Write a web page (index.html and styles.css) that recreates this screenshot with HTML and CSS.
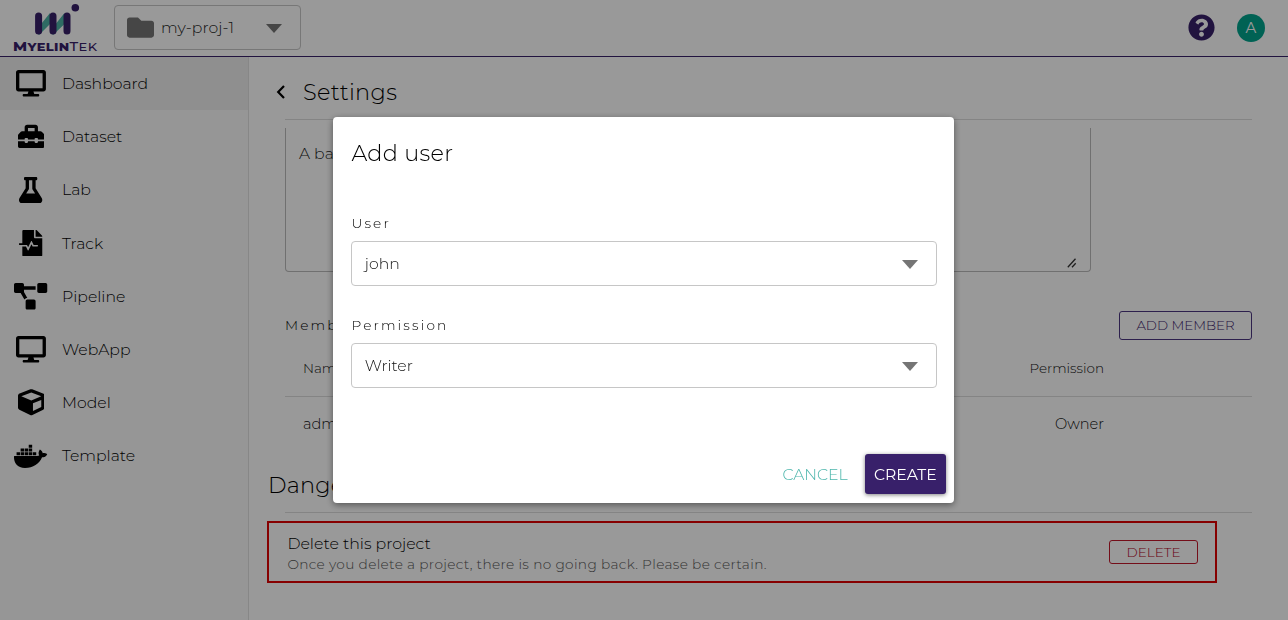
FILE: index.html
```html
<!DOCTYPE html>
<html lang="en">
<head>
<meta charset="utf-8">
<title>MyelinTek - Settings</title>
<link rel="stylesheet" href="styles.css">
</head>
<body>
<div class="app">
  <header class="topbar">
    <div class="logo">
      <svg class="logo-mark" viewBox="0 0 48 38" width="48" height="38">
        <path d="M3.5 31L18 13V24L7 35ZM18 31L32.5 13V24L21 35Z" fill="#4eb3a6"/>
        <path d="M6.6 16V31M21 16V31M35 16V31" stroke="#38206a" stroke-width="7" stroke-linecap="round" fill="none"/>
        <circle cx="43.3" cy="7.7" r="3.8" fill="#38206a"/>
      </svg>
      <div class="logo-name"><span class="cap">M</span><span>YELIN</span><span class="cap thin">T</span><span class="thin">EK</span></div>
    </div>
    <div class="project-select">
      <svg class="folder" viewBox="0 0 512 512" width="27" height="27" fill="#757575"><path d="M464 128H272l-64-64H48C21.49 64 0 85.49 0 112v288c0 26.51 21.49 48 48 48h416c26.51 0 48-21.49 48-48V176c0-26.51-21.49-48-48-48z"/></svg>
      <span class="project-name">my-proj-1</span>
      <i class="caret"></i>
    </div>
    <div class="top-actions">
      <svg viewBox="0 0 512 512" width="27" height="27" fill="#38206a"><path d="M504 256c0 136.997-111.043 248-248 248S8 392.997 8 256C8 119.083 119.043 8 256 8s248 111.083 248 248zM262.655 90c-54.497 0-89.255 22.957-116.549 63.758-3.536 5.286-2.353 12.415 2.715 16.258l34.699 26.31c5.205 3.947 12.621 3.008 16.665-2.122 17.864-22.658 30.113-35.797 57.303-35.797 20.429 0 45.698 13.148 45.698 32.958 0 14.976-12.363 22.667-32.534 33.976C247.128 238.528 216 254.941 216 296v4c0 6.627 5.373 12 12 12h56c6.627 0 12-5.373 12-12v-1.333c0-28.462 83.186-29.647 83.186-106.667 0-58.002-60.165-102-116.531-102zM256 338c-25.365 0-46 20.635-46 46 0 25.364 20.635 46 46 46s46-20.636 46-46c0-25.364-20.635-46-46-46z"/></svg>
      <div class="avatar">A</div>
    </div>
  </header>
  <div class="body">
    <nav class="sidebar">
      <a class="item active"><span class="icon"><svg viewBox="0 0 576 512"><path d="M528 0H48C21.5 0 0 21.5 0 48v320c0 26.5 21.5 48 48 48h192l-16 48h-72c-13.3 0-24 10.7-24 24s10.7 24 24 24h272c13.3 0 24-10.7 24-24s-10.7-24-24-24h-72l-16-48h192c26.5 0 48-21.5 48-48V48c0-26.5-21.5-48-48-48zm-16 352H64V64h448v288z"/></svg></span><span>Dashboard</span></a>
      <a class="item"><span class="icon"><svg viewBox="0 0 512 512"><path d="M502.63 214.63l-45.25-45.25c-6-6-14.14-9.37-22.63-9.37H384V80c0-26.51-21.49-48-48-48H176c-26.51 0-48 21.49-48 48v80H77.25c-8.49 0-16.62 3.37-22.63 9.37L9.37 214.63c-6 6-9.37 14.14-9.37 22.63V320h128v-16c0-8.84 7.16-16 16-16h32c8.84 0 16 7.16 16 16v16h128v-16c0-8.84 7.16-16 16-16h32c8.84 0 16 7.16 16 16v16h128v-82.75c0-8.48-3.37-16.62-9.37-22.62zM320 160H192V96h128v64zm64 208c0 8.84-7.16 16-16 16h-32c-8.84 0-16-7.16-16-16v-16H192v16c0 8.84-7.16 16-16 16h-32c-8.84 0-16-7.16-16-16v-16H0v96c0 17.67 14.33 32 32 32h448c17.67 0 32-14.33 32-32v-96H384v16z"/></svg></span><span>Dataset</span></a>
      <a class="item"><span class="icon"><svg viewBox="0 0 448 512"><path d="M437.2 403.5L320 215V64h8c13.3 0 24-10.7 24-24V24c0-13.3-10.7-24-24-24H120c-13.3 0-24 10.7-24 24v16c0 13.3 10.7 24 24 24h8v151L10.8 403.5C-18.5 450.6 15.3 512 70.9 512h306.2c55.7 0 89.4-61.5 60.1-108.5zM137.9 320l48.2-77.6c3.7-5.2 5.8-11.6 5.8-18.4V64h64v160c0 6.9 2.2 13.2 5.8 18.4l48.2 77.6h-172z"/></svg></span><span>Lab</span></a>
      <a class="item"><span class="icon"><svg viewBox="0 0 448 512"><path d="M288 136V0H88C74.7 0 64 10.7 64 24v232H8c-4.4 0-8 3.6-8 8v16c0 4.4 3.6 8 8 8h140.9c3 0 5.8 1.7 7.2 4.4l19.9 39.8 56.8-113.7c2.9-5.9 11.4-5.9 14.3 0l34.7 69.5H352c8.8 0 16 7.2 16 16s-7.2 16-16 16h-89.9L240 275.8l-56.8 113.7c-2.9 5.9-11.4 5.9-14.3 0L134.1 320H64v168c0 13.3 10.7 24 24 24h336c13.3 0 24-10.7 24-24V160H312c-13.2 0-24-10.8-24-24zm153-31L343.1 7c-4.5-4.5-10.6-7-17-7H320v128h128v-6.1c0-6.3-2.5-12.4-7-16.9z"/></svg></span><span>Track</span></a>
      <a class="item"><span class="icon"><svg viewBox="0 0 640 512"><path d="M384 320H256c-17.67 0-32 14.33-32 32v128c0 17.67 14.33 32 32 32h128c17.67 0 32-14.33 32-32V352c0-17.67-14.33-32-32-32zM192 32c0-17.67-14.33-32-32-32H32C14.33 0 0 14.33 0 32v128c0 17.67 14.33 32 32 32h95.72l73.16 128.04C211.98 300.98 232.4 288 256 288h.28L192 175.51V128h224V64H192V32zM608 0H480c-17.67 0-32 14.33-32 32v128c0 17.67 14.33 32 32 32h128c17.67 0 32-14.33 32-32V32c0-17.67-14.33-32-32-32z"/></svg></span><span>Pipeline</span></a>
      <a class="item"><span class="icon"><svg viewBox="0 0 576 512"><path d="M528 0H48C21.5 0 0 21.5 0 48v320c0 26.5 21.5 48 48 48h192l-16 48h-72c-13.3 0-24 10.7-24 24s10.7 24 24 24h272c13.3 0 24-10.7 24-24s-10.7-24-24-24h-72l-16-48h192c26.5 0 48-21.5 48-48V48c0-26.5-21.5-48-48-48zm-16 352H64V64h448v288z"/></svg></span><span>WebApp</span></a>
      <a class="item"><span class="icon"><svg viewBox="0 0 512 512"><path d="M239.1 6.3l-208 78c-18.7 7-31.1 25-31.1 45v225.1c0 18.2 10.3 34.8 26.5 42.9l208 104c13.5 6.8 29.4 6.8 42.9 0l208-104c16.3-8.1 26.5-24.8 26.5-42.9V129.3c0-20-12.4-37.9-31.1-44.9l-208-78C262 2.2 250 2.2 239.1 6.3zM256 68.4l192 72v1.1l-192 78-192-78v-1.1l192-72zm32 356V275.5l160-65v133.9l-160 80z"/></svg></span><span>Model</span></a>
      <a class="item"><span class="icon"><svg viewBox="0 0 640 512"><path d="M349.9 236.3h-66.1v-59.4h66.1v59.4zm0-204.3h-66.1v60.7h66.1V32zm78.2 144.8H362v59.4h66.1v-59.4zm-156.3-72.1h-66.1v60.1h66.1v-60.1zm78.1 0h-66.1v60.1h66.1v-60.1zm276.8 100c-14.4-9.7-47.6-13.2-73.1-8.4-3.3-24-16.7-44.9-41.1-63.7l-14-9.3-9.3 14c-18.4 27.8-23.4 73.6-3.7 103.8-8.7 4.7-25.8 11.1-48.4 10.7H2.4c-8.7 50.8 5.8 116.8 44 162.1 37.1 43.9 92.7 66.2 165.4 66.2 157.4 0 273.9-72.5 328.4-204.2 21.4.4 67.6.1 91.3-45.2 1.5-2.5 6.6-13.2 8.5-17.1l-13.3-8.9zm-511.1-27.9h-66v59.4h66.1v-59.4zm78.1 0h-66.1v59.4h66.1v-59.4zm78.1 0h-66.1v59.4h66.1v-59.4zm-78.1-72.1h-66.1v60.1h66.1v-60.1z"/></svg></span><span>Template</span></a>
    </nav>
    <main class="main">
      <div class="page-head">
        <svg width="10" height="14" viewBox="0 0 10 14" fill="none" stroke="#000" stroke-width="2.2"><path d="M8 1L2.2 7L8 13"/></svg>
        <h1>Settings</h1>
      </div>
      <div class="scroll">
        <div class="description"><span>A ba</span>
          <svg class="grip" width="10" height="10" viewBox="0 0 10 10" stroke="#333" stroke-width="1.3"><path d="M.8 9.2L8.5 .8M5 9.2L8.7 5.2"/></svg>
        </div>
        <div class="members-head"><span class="label">Memb</span><button class="add">ADD MEMBER</button></div>
        <div class="row row-head"><span>Name</span><span>Permission</span></div>
        <div class="row"><span>admin</span><span>Owner</span></div>
        <h2>Danger</h2>
        <div class="danger">
          <div>
            <div class="danger-title">Delete this project</div>
            <div class="danger-text">Once you delete a project, there is no going back. Please be certain.</div>
          </div>
          <button class="delete">DELETE</button>
        </div>
      </div>
    </main>
  </div>
</div>
<div class="overlay">
  <div class="dialog">
    <h2 class="dialog-title">Add user</h2>
    <div class="label user-label">User</div>
    <div class="select"><span>john</span><i class="caret"></i></div>
    <div class="label perm-label">Permission</div>
    <div class="select"><span>Writer</span><i class="caret"></i></div>
    <div class="dialog-actions"><button class="cancel">CANCEL</button><button class="create">CREATE</button></div>
  </div>
</div>
</body>
</html>
```
FILE: styles.css
```css
* { box-sizing: border-box; }
body { margin: 0; font-family: Montserrat, Inter, sans-serif; font-weight: 300; color: #000; overflow: hidden; }
h1, h2 { margin: 0; font-size: 22.4px; font-weight: 300; line-height: 30px; letter-spacing: .35px; white-space: nowrap; }
button { font-family: inherit; font-weight: 300; padding: 0; background: none; border: 0; display: block; white-space: nowrap; }
svg { display: block; flex: none; }
.app { height: 620px; display: flex; flex-direction: column; background: #fff; }

.topbar { height: 57px; flex: none; border-bottom: 1px solid #38206a; display: flex; padding-left: 13px; }
.logo { width: 84px; height: 56px; flex: none; padding-left: 19px; }
.logo-name { width: 70px; margin: 2px 0 0 -19px; font-size: 10.8px; line-height: 13px; font-weight: 800; color: #38206a; white-space: nowrap; letter-spacing: .3px; transform: scaleX(1.2); transform-origin: left; }
.logo-name .cap { font-size: 12.3px; }
.logo-name .thin { font-weight: 500; }
.project-select { width: 187px; height: 45px; margin: 5px 0 0 17px; border: 1px solid #c6c6c6; border-radius: 4px; display: flex; align-items: center; padding: 0 18px 0 12px; }
.project-name { margin-left: 7px; flex: 1; font-size: 15.7px; letter-spacing: .1px; color: #222; }
.caret { width: 0; height: 0; border: 8px solid transparent; border-top: 9px solid #757575; border-bottom: 0; }
.project-select .caret, .select .caret { margin-top: 1px; }
.top-actions { margin-left: auto; padding: 0 23px 1px 0; display: flex; align-items: center; gap: 22px; }
.avatar { width: 28px; height: 28px; border-radius: 50%; background: #00a38d; color: #fff; font-size: 15px; font-weight: 400; line-height: 28px; text-align: center; }

.body { display: flex; flex: 1; min-height: 0; }
.sidebar { width: 249px; flex: none; background: #fafafa; border-right: 1px solid #e2e2e2; }
.item { height: 53.2px; display: flex; align-items: center; font-size: 15.7px; }
.item.active { background: #eee; }
.icon { width: 62px; flex: none; display: flex; justify-content: center; }
.icon svg { height: 26.6px; width: auto; }

.main { flex: 1; padding: 0 36px 0 19px; min-width: 0; }
.page-head { height: 63px; margin-left: 17px; border-bottom: 1px solid #ddd; display: flex; align-items: center; padding-top: 8px; }
.page-head svg { margin-left: -9px; }
.page-head h1 { margin-left: 17px; }
.scroll { margin: 8px 0 0 -1px; padding-left: 1px; overflow: hidden; height: 480px; }
.description { height: 144px; margin: 0 161px 0 17px; border: 1px solid #bbb; border-top: 0; border-radius: 0 0 4px 4px; position: relative; padding: 16px 13px; font-size: 15.7px; line-height: 20px; color: #222; }
.grip { position: absolute; right: 13px; bottom: 3px; }
.members-head { margin: 39px 0 0 17px; height: 29px; display: flex; align-items: center; justify-content: space-between; }
.members-head .label { padding-bottom: 1px; }
.label { font-size: 13.7px; line-height: 18px; letter-spacing: 2.15px; color: #000; }
.add { width: 133px; height: 29px; border: 1px solid #4b3680; border-radius: 3px; color: #38206a; font-size: 13.4px; padding-bottom: 1px; }
.row { margin-left: 17px; height: 53px; padding: 0 148px 0 18px; display: flex; align-items: center; justify-content: space-between; font-size: 14.6px; color: #111; }
.row-head { height: 57px; border-bottom: 1px solid #ddd; font-size: 13.5px; }
.scroll h2 { height: 62px; padding-top: 20px; letter-spacing: .2px; }
.scroll h2::after { content: ""; display: block; height: 1px; background: #ddd; margin: 12px 0 0 17px; }
.danger { width: 950px; height: 62px; margin: 9px 0 0 -1px; border: 2px solid #e00000; display: flex; align-items: center; justify-content: space-between; padding: 0 17px 0 18.4px; }
.danger-title { padding-top: 2px; font-size: 15.8px; line-height: 21px; }
.danger-text { font-size: 13.7px; letter-spacing: .35px; line-height: 20px; color: #555; }
.delete { width: 89px; height: 24px; border: 1px solid #c2182b; border-radius: 3px; color: #b00020; font-size: 13.6px; }

.overlay { position: fixed; inset: 0; background: rgba(0, 0, 0, .4); display: flex; }
.dialog { width: 621px; height: 386px; margin: 117px 0 0 333.4px; background: #fff; border-radius: 4px; box-shadow: 0 2px 7px rgba(0, 0, 0, .45); padding: 21px 17.6px 9px 18px; }
.dialog-title { letter-spacing: .3px; }
.dialog .label { margin: 46px 0 9px; }
.dialog .perm-label { margin: 30px 0 9px; }
.select { height: 45px; border: 1px solid #c6c6c6; border-radius: 4px; padding: 0 18px 0 12.4px; display: flex; align-items: center; justify-content: space-between; font-size: 15.7px; color: #111; }
.dialog-actions { margin: 66px -9px 0 0; display: flex; justify-content: flex-end; gap: 17px; }
.cancel { color: #4db6ac; font-size: 15.7px; }
.create { width: 81px; height: 40px; background: #38206a; color: #fff; border-radius: 3px; box-shadow: 0 1px 4px rgba(0, 0, 0, .5); font-size: 15.6px; font-weight: 400; }
```
